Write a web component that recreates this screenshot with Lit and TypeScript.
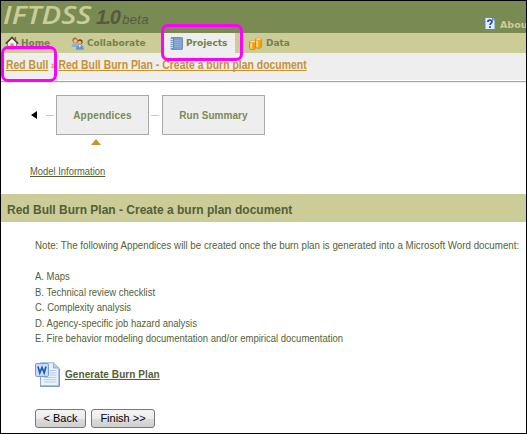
import { LitElement, html, css, svg } from "lit";
import { customElement } from "lit/decorators.js";

const home = html`<svg width="14" height="14" viewBox="0 0 14 14">
  <path d="M2.5 6.5V13h9V6.5L7 2z" fill="#f6f6f0" stroke="#8a8a80" />
  <path d="M.8 7.6 7 1.4l6.2 6.2" fill="none" stroke="#4f4840" stroke-width="1.8" />
  <path d="M10.4 1v3.4" stroke="#a85040" stroke-width="1.5" />
  <rect x="5.4" y="7.4" width="3.4" height="5.6" fill="#e8941e" />
</svg>`;

const people = html`<svg width="13" height="13" viewBox="0 0 13 13">
  <circle cx="4" cy="3.2" r="2.6" fill="#a8743c" /><circle cx="4.3" cy="4" r="1.8" fill="#f0bf8f" />
  <path d="M.5 10c0-3 1.5-4 3.5-4s3.5 1 3.5 4z" fill="#8fb0dc" />
  <circle cx="9" cy="4.8" r="2.6" fill="#7a3a20" /><circle cx="8.7" cy="5.6" r="1.8" fill="#efb482" />
  <path d="M5 12.7c0-3.5 1.6-4.6 4-4.6s3.7 1.1 3.7 4.6z" fill="#6a94d0" />
  <path d="m7.8 8.2 1 2.4 1.2-2.4z" fill="#fff" />
</svg>`;

const notebook = html`<svg width="13" height="13" viewBox="0 0 13 13">
  <rect x="1" y=".5" width="11.5" height="12" rx=".6" fill="#7e9fcb" stroke="#7393c0" />
  <path d="M4.5 3.5H11M4.5 5.5H11M4.5 7.5H11M4.5 9.5H11" stroke="#8facd5" />
  <path d="M3.3 1v11" stroke="#6484b4" />
  <path d="M0 2.5h3M0 4.5h3M0 6.5h3M0 8.5h3M0 10.5h3" stroke="#dfe6ee" stroke-width=".9" />
</svg>`;

const cylinder = (x: number, y: number, h: number) => svg`<g transform="translate(${x} ${y})">
  <path d="M.4 1.7v${h}c0 1.7 5.8 1.7 5.8 0v-${h}z" fill="#efa81c" stroke="#c98214" stroke-width=".8" />
  <path d="M1.9 3v${h - 1}" stroke="#ffe08a" stroke-width="1.5" />
  <ellipse cx="3.3" cy="1.7" rx="2.9" ry="1.2" fill="#ffe08c" stroke="#d99a28" stroke-width=".6" />
</g>`;
const data = html`<svg width="13" height="13" viewBox="0 0 13 13">${cylinder(6.2, 0.3, 8)}${cylinder(0.2, 2.8, 7)}</svg>`;

const help = html`<svg width="12" height="13" viewBox="0 0 12 13">
  <path d="M1 .5h7.5L11 3v9.5H1z" fill="#e4eefb" stroke="#5f88c8" />
  <path d="M8.5.5V3H11" fill="#9fbce6" stroke="#4871b5" stroke-width=".7" />
  <path d="M3.8 5c0-2.4 4.2-2.4 4.2 0 0 1.4-2 1.5-2 3" fill="none" stroke="#2450a4" stroke-width="1.7" />
  <rect x="5.1" y="9.2" width="1.8" height="1.8" fill="#2450a4" />
</svg>`;

const wordDoc = html`<svg width="25" height="25" viewBox="0 0 25 25">
  <path d="M5.5.8h13L24 6v18H5.5z" fill="#edf3fd" stroke="#8dabdb" />
  <path d="M5 24.3H24.3V7" fill="none" stroke="#5f83bd" stroke-width=".9" />
  <path d="M18.5.8V6H24" fill="#b9cff0" stroke="#8dabdb" />
  <path d="M14.5 8.5h7M14.5 10.8h7M14.5 13h7M9 15.5h12.5M9 17.7h12.5M9 20h12.5" stroke="#b4caec" />
  <rect x=".6" y="1.6" width="12.8" height="12.8" rx="1" fill="#cfe0f8" stroke="#6c94d0" />
  <path d="m3 4.6 1.8 6.2L7 5.4l2.2 5.4L11 4.6" fill="none" stroke="#1f5bb5" stroke-width="1.7" />
</svg>`;

@customElement("app-root")
export class AppRoot extends LitElement {
  static styles = css`
    :host {
      display: block;
      position: relative;
      box-sizing: border-box;
      width: 527px;
      height: 434px;
      border: 1px solid #000;
      overflow: hidden;
      background: #fff;
      color: #535f35;
      font: 10px/16px "Liberation Sans", Arial, sans-serif;
      white-space: nowrap;
    }
    * { box-sizing: border-box; }
    svg { display: block; flex: none; }
    a { color: inherit; text-decoration: underline; text-decoration-skip-ink: none; }
    .fit { display: inline-block; transform-origin: 0 50%; }
    .header {
      height: 32px;
      background: #7a8a53;
      display: flex;
      justify-content: space-between;
    }
    .brand { display: flex; align-items: baseline; padding-left: 2px; height: 32px; font-style: italic; line-height: 26px; }
    .name { width: 93px; }
    .name .fit { color: #cccc99; font: italic 600 25px/27px "Open Sans", "Noto Sans", sans-serif; transform: scaleX(1.17); }
    .version { color: #57593f; font-size: 20px; font-weight: bold; letter-spacing: -1.5px; }
    .beta { color: #57593f; font-size: 13px; margin-left: 3px; letter-spacing: 0.3px; }
    .about { width: 42px; display: flex; gap: 4px; padding-top: 16px; color: #cccc99; font: bold 9.5px/15px "DejaVu Sans", sans-serif; }
    .nav {
      height: 20px;
      background: #cccc99;
      display: flex;
      color: #71834a;
      font: bold 9px/20px "DejaVu Sans", sans-serif;
    }
    .tab { display: flex; align-items: center; gap: 3px; height: 20px; }
    .home { padding-left: 4px; width: 66px; gap: 2px; }
    .collab { padding-left: 4px; width: 97px; }
    .projects { padding-left: 6px; width: 71px; background: #eee; }
    .data { padding-left: 14px; gap: 4px; }
    .crumbs {
      height: 27px;
      background: #eee;
      color: #c8922e;
      font-size: 12px;
      font-weight: bold;
      line-height: 25px;
      padding-left: 5px;
    }
    .crumbs .fit { transform: scaleX(0.87); }
    .sep { font-size: 10px; margin: 0 3px; }
    .rule { height: 2px; margin-top: 1px; background: #a5aa94; border-bottom: 1px solid #eee; }
    .steps { display: flex; align-items: center; height: 40px; margin: 12px 0 0 30px; }
    .prev { border: 4px solid transparent; border-left: 0; border-right: 6px solid #000; margin-right: 9px; }
    .dash { width: 8px; border-top: 1px solid #ccc; }
    .step {
      height: 40px;
      border: 1px solid #aaa;
      background: #eee;
      color: #7a8a53;
      font-weight: bold;
      line-height: 40px;
      text-align: center;
      margin: 0 2px;
    }
    .current { width: 93px; letter-spacing: 0.2px; }
    .summary { width: 103px; margin-left: 3px; letter-spacing: 0.05px; }
    .pointer { width: 0; border: 5.5px solid transparent; border-top: 0; border-bottom: 6px solid #c8922e; margin: 4px 0 0 90px; }
    .model { margin: 19px 0 0 29px; }
    .model .fit { transform: scaleX(0.94); }
    .title { height: 28px; margin-top: 14px; padding-left: 6px; background: #cccc99; font-size: 12.5px; font-weight: bold; line-height: 32px; }
    .title .fit { transform: scaleX(0.96); }
    .body { padding: 16px 0 0 34px; }
    .note { height: 16px; width: 485px; }
    .note .fit { transform: scaleX(0.975); }
    .list .fit { transform: scaleX(0.949); }
    .list { list-style: none; margin: 15px 0 0; padding: 0; line-height: 15.5px; }
    .list li { height: 15.5px; }
    .generate { display: flex; align-items: center; gap: 5px; margin-top: 15px; font-weight: bold; letter-spacing: 0.08px; }
    .generate a { padding-top: 2px; }
    .actions { display: flex; gap: 5px; margin-top: 22px; }
    .btn {
      height: 19px;
      padding: 0;
      border: 1px solid #777;
      border-radius: 3px;
      background: linear-gradient(#f4f4f4, #ececec 50%, #dcdcdc 51%, #d0d0d0);
      color: #000;
      font: 11px/16px "Liberation Sans", Arial, sans-serif;
    }
    .back { width: 51px; }
    .finish { width: 64px; }
    .mark { position: absolute; border: 3px solid #ff00ff; border-radius: 7px; }
    .mark-crumb { left: 0; top: 45px; width: 56px; height: 36px; }
    .mark-tab { left: 160px; top: 23px; width: 82px; height: 37px; }
  `;

  render() {
    return html`
      <div class="header">
        <div class="brand"><span class="name"><span class="fit">IFTDSS</span></span><span class="version">1.0</span><span class="beta">beta</span></div>
        <div class="about">${help}<span>Abou</span></div>
      </div>
      <div class="nav">
        <div class="tab home">${home}<span>Home</span></div>
        <div class="tab collab">${people}<span>Collaborate</span></div>
        <div class="tab projects">${notebook}<span>Projects</span></div>
        <div class="tab data">${data}<span>Data</span></div>
      </div>
      <div class="crumbs"><span class="fit"><a>Red Bull</a><span class="sep">»</span><a>Red Bull Burn Plan - Create a burn plan document</a></span></div>
      <div class="rule"></div>
      <div class="steps">
        <span class="prev"></span><span class="dash"></span>
        <div class="step current">Appendices</div>
        <span class="dash"></span>
        <div class="step summary">Run Summary</div>
      </div>
      <div class="pointer"></div>
      <div class="model"><a class="fit">Model Information</a></div>
      <div class="title"><span class="fit">Red Bull Burn Plan - Create a burn plan document</span></div>
      <div class="body">
        <div class="note"><span class="fit">Note: The following Appendices will be created once the burn plan is generated into a Microsoft Word document:</span></div>
        <ul class="list">
          <li><span class="fit">A. Maps</span></li>
          <li><span class="fit">B. Technical review checklist</span></li>
          <li><span class="fit">C. Complexity analysis</span></li>
          <li><span class="fit">D. Agency-specific job hazard analysis</span></li>
          <li><span class="fit">E. Fire behavior modeling documentation and/or empirical documentation</span></li>
        </ul>
        <div class="generate">${wordDoc}<a>Generate Burn Plan</a></div>
        <div class="actions"><button class="btn back">&lt; Back</button><button class="btn finish">Finish &gt;&gt;</button></div>
      </div>
      <div class="mark mark-crumb"></div>
      <div class="mark mark-tab"></div>
    `;
  }
}
